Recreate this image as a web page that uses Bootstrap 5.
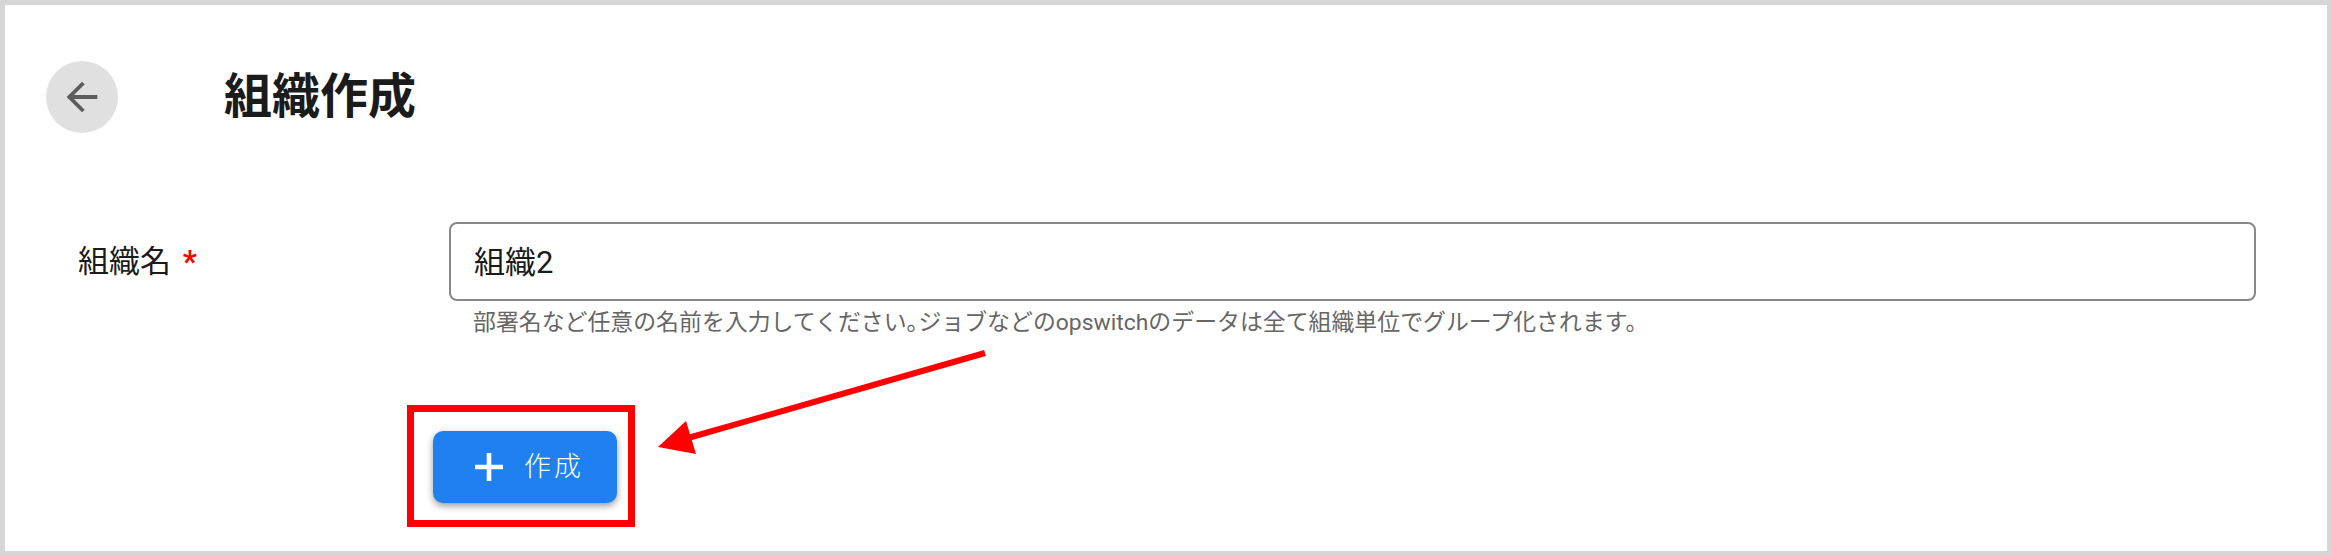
<!DOCTYPE html>
<html lang="ja">
<head>
  <meta charset="UTF-8">
  <title>組織作成</title>
  <link href="https://cdn.jsdelivr.net/npm/bootstrap@5.3.0/dist/css/bootstrap.min.css" rel="stylesheet">
  <style>
    html, body { height: 100%; }
    body { font-family: Roboto, "Noto Sans CJK JP", sans-serif; color: #1b1b1b; background: #fff; overflow: hidden; }
    .frame { width: 2332px; height: 556px; border: 5px solid #d6d6d6; padding: 56px 71px 0 41px; position: relative; }
    .back-btn { width: 72px; height: 72px; padding: 0; border: 0; border-radius: 50%; background: #e0e0e0; }
    .page-title { font-size: 48px; line-height: 72px; font-weight: 700; margin: 0 0 0 106px; }
    .form-line { margin-top: 89px; }
    .name-label { width: 403px; padding: 20px 0 0 32px; font-size: 31px; line-height: 40px; margin: 0; }
    .name-label span { color: #f00; font-weight: 700; margin-left: 4px; }
    .name-input.form-control { height: 79px; border: 2px solid #888; border-radius: 8px; padding: 0 24px 5px 23px; font-size: 31px; color: #1b1b1b; font-family: inherit; box-shadow: none; }
    .help-line { font-size: 22.9px; line-height: 30px; color: #666; margin: 7px 0 0 24px; }
    .tight-stop { letter-spacing: -11px; }
    .red-box { width: 228px; height: 122px; border: 7px solid #f00; padding: 19px 0 0 19px; margin: 67px 0 0 361px; }
    .make-btn { width: 184px; height: 72px; padding: 0 0 0 42px; border: 0; border-radius: 10px; background: #2080f0; color: #fff; font-size: 27px; font-weight: 300; letter-spacing: 3px; gap: 21px; box-shadow: 0 3px 7px rgba(0,0,0,.4); }
    .make-btn:hover { background: #2080f0; color: #fff; }
    .arrow-layer { position: absolute; left: -5px; top: -5px; pointer-events: none; }
  </style>
</head>
<body>
  <div class="frame">
    <!-- ヘッダー -->
    <div class="d-flex align-items-center">
      <button type="button" class="back-btn d-flex align-items-center justify-content-center" aria-label="戻る">
        <svg width="46" height="46" viewBox="0 0 24 24"><path d="M20 11H7.83l5.59-5.59L12 4l-8 8 8 8 1.41-1.41L7.83 13H20v-2z" fill="#5c5c5c"/></svg>
      </button>
      <h1 class="page-title">組織作成</h1>
    </div>

    <!-- フォーム -->
    <div class="form-line d-flex">
      <label for="orgName" class="name-label flex-shrink-0">組織名 <span>*</span></label>
      <div class="flex-grow-1">
        <input type="text" id="orgName" class="form-control name-input" value="組織2">
        <p class="help-line">部署名など任意の名前を入力してください<span class="tight-stop">。</span>ジョブなどのopswitchのデータは全て組織単位でグループ化されます。</p>
      </div>
    </div>

    <div class="red-box">
      <button type="button" class="btn make-btn d-flex align-items-center">
        <svg class="flex-shrink-0" width="28" height="28" viewBox="0 0 28 28"><path d="M14 0v28M0 14h28" stroke="#fff" stroke-width="4.6"/></svg>
        <span>作成</span>
      </button>
    </div>

    <!-- 注釈の矢印 -->
    <svg class="arrow-layer" width="2332" height="556" viewBox="0 0 2332 556">
      <path d="M985 353 688 438" stroke="#f00" stroke-width="6"/>
      <path d="M658 447 686 421 696 454Z" fill="#f00"/>
    </svg>
  </div>
  <script src="https://cdn.jsdelivr.net/npm/bootstrap@5.3.0/dist/js/bootstrap.bundle.min.js"></script>
</body>
</html>
